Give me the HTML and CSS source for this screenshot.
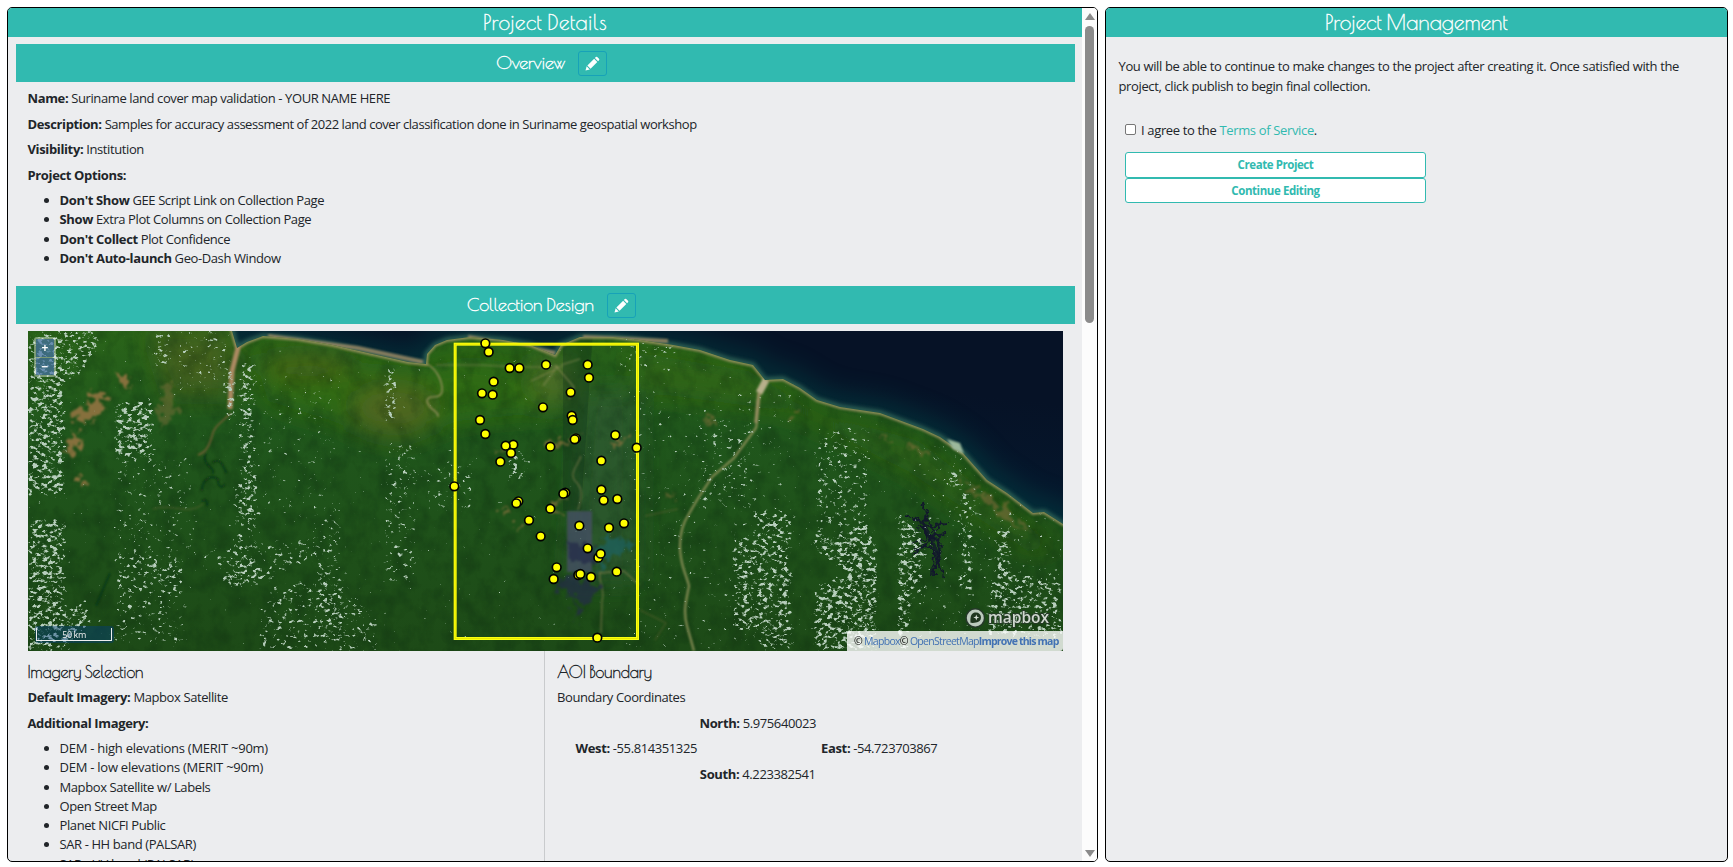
FILE: index.html
```html
<!DOCTYPE html>
<html lang="en">
<head>
<meta charset="utf-8">
<title>Project Details</title>
<link rel="stylesheet" href="styles.css">
</head>
<body>
<main class="page">
  <section class="panel details">
    <div class="scroll-content">
      <h1 class="panel-title"><span class="t-details">Project Details</span></h1>
      <div class="sections">
        <h2 class="section-title"><span class="t-overview">Overview</span>
          <button class="edit" aria-label="Edit overview"><svg viewBox="0 0 14 14"><path d="M.5 13.500l1-4 3 3z"/><path d="M2.200 8.800L8.500 2.500l3 3-6.300 6.300z"/><path d="M9.200 1.800l.9-.9q.7-.5 1.300 0l1.700 1.700q.5.6 0 1.300l-.9.9z"/></svg></button>
        </h2>
        <div class="overview">
          <p><b>Name:</b> <span class="t-name">Suriname land cover map validation - YOUR NAME HERE</span></p>
          <p><b>Description:</b> <span class="t-desc">Samples for accuracy assessment of 2022 land cover classification done in Suriname geospatial workshop</span></p>
          <p><b>Visibility:</b> Institution</p>
          <p><b>Project Options:</b></p>
          <ul>
            <li><b>Don't Show</b> GEE Script Link on Collection Page</li>
            <li><b>Show</b> Extra Plot Columns on Collection Page</li>
            <li><b>Don't Collect</b> Plot Confidence</li>
            <li><b>Don't Auto-launch</b> Geo-Dash Window</li>
          </ul>
        </div>
        <h2 class="section-title"><span class="t-design">Collection Design</span>
          <button class="edit" aria-label="Edit design"><svg viewBox="0 0 14 14"><path d="M.5 13.500l1-4 3 3z"/><path d="M2.200 8.800L8.500 2.500l3 3-6.300 6.300z"/><path d="M9.200 1.800l.9-.9q.7-.5 1.300 0l1.700 1.700q.5.6 0 1.300l-.9.9z"/></svg></button>
        </h2>
        <div class="map">
          <svg class="imagery" viewBox="0 0 1035 320">
            <defs>
              <linearGradient id="sea" x1="0" y1="1" x2="0.35" y2="0">
                <stop offset="0" stop-color="#03353f"/><stop offset=".45" stop-color="#041c33"/><stop offset="1" stop-color="#061226"/>
              </linearGradient>
              <linearGradient id="land" x1="0" y1="0" x2="0" y2="1">
                <stop offset="0" stop-color="#2a6419"/><stop offset=".3" stop-color="#20571c"/><stop offset="1" stop-color="#1d4a17"/>
              </linearGradient>
              <filter id="b2" x="-30%" y="-30%" width="160%" height="160%"><feGaussianBlur stdDeviation="2"/></filter>
              <filter id="b1" x="-10%" y="-10%" width="120%" height="120%"><feGaussianBlur stdDeviation=".8"/></filter>
              <filter id="b12" x="-60%" y="-60%" width="220%" height="220%"><feGaussianBlur stdDeviation="12"/></filter>
              <filter id="rough" x="-20%" y="-20%" width="140%" height="140%" color-interpolation-filters="sRGB">
                <feTurbulence type="fractalNoise" baseFrequency=".12" numOctaves="3" seed="8" result="n"/>
                <feDisplacementMap in="SourceGraphic" in2="n" scale="22" xChannelSelector="R" yChannelSelector="G"/>
                <feGaussianBlur stdDeviation=".8"/>
              </filter>
              <filter id="wobble" x="-20%" y="-20%" width="140%" height="140%" color-interpolation-filters="sRGB">
                <feTurbulence type="fractalNoise" baseFrequency=".15" numOctaves="3" seed="4" result="n"/>
                <feDisplacementMap in="SourceGraphic" in2="n" scale="9" xChannelSelector="R" yChannelSelector="G"/>
                <feGaussianBlur stdDeviation=".6"/>
              </filter>
              <filter id="grain" x="0" y="0" width="100%" height="100%" color-interpolation-filters="sRGB">
                <feTurbulence type="fractalNoise" baseFrequency=".06 .05" numOctaves="5" seed="3"/>
                <feColorMatrix values="0 0 0 0 .02  0 0 0 0 .12  0 0 0 0 .05  1.600 0 0 0 -.65"/>
              </filter>
              <filter id="clouds" filterUnits="userSpaceOnUse" x="0" y="0" width="1035" height="320" color-interpolation-filters="sRGB">
                <feTurbulence type="fractalNoise" baseFrequency=".2 .27" numOctaves="4" seed="21"/>
                <feColorMatrix values="0 0 0 0 0  0 0 0 0 0  0 0 0 0 0  1 0 0 0 0" result="n"/>
                <feGaussianBlur in="SourceAlpha" stdDeviation="2 2" result="d"/>
                <feComposite in="n" in2="d" operator="arithmetic" k2="1" k3=".36" k4="-.875"/>
                <feColorMatrix values="0 0 0 0 .72  0 0 0 0 .81  0 0 0 0 .74  0 0 0 7 0"/>
                <feGaussianBlur stdDeviation=".45"/>
              </filter>
              <clipPath id="landclip"><path id="landpath" d="M-20 -20H203L204 0 209 17 219 11 235 5 270 8 305 14 340 22 380 31 398 33 399 23 407 14 419 9 442 6 475 9 502 14 527 24 533 14 552 6 585 6 612 9 645 14 672 19 702 29 725 34 737 49 755 48 772 57 789 69 812 76 852 82 895 98 912 106 935 122 959 149 979 162 1005 182 1016 181 1035 193 1055 200V340H-20Z"/></clipPath>
            </defs>
            <rect width="1035" height="320" fill="url(#sea)"/>
            <use href="#landpath" fill="none" stroke="#06594f" stroke-width="30" opacity=".35" filter="url(#b12)"/>
            <use href="#landpath" fill="none" stroke="#3f7c65" stroke-width="5" opacity=".7" filter="url(#b2)"/>
            <path d="M240 5L330 17 395 31M440 6L527 22M555 6L640 10" fill="none" stroke="#a48d66" stroke-width="4" opacity=".8" filter="url(#b1)"/>
            <g clip-path="url(#landclip)">
              <rect width="1035" height="320" fill="url(#land)"/>
              <g filter="url(#b12)">
                <path d="M225 20L390 40 440 25 530 40 530 80 430 90 370 110 240 70Z" fill="#347010" opacity=".7"/>
                <path d="M600 20L720 40 800 85 890 110 980 180 1035 220 1000 220 880 140 760 80 610 60Z" fill="#396b15" opacity=".6"/>
                <ellipse cx="365" cy="78" rx="42" ry="26" fill="#6b6226" opacity=".5"/>
                <path d="M120 0H205V65H140Z" fill="#59601f" opacity=".55"/>
                <ellipse cx="280" cy="35" rx="48" ry="12" fill="#626020" opacity=".5"/>
                <ellipse cx="525" cy="50" rx="22" ry="24" fill="#667235" opacity=".55"/>
                <path d="M555 60H610V250H540Z" fill="#315c38" opacity=".6"/>
              </g>
              <rect width="1035" height="320" filter="url(#grain)" opacity=".35"/>
              <path d="M535 0H565L553 180H535Z" fill="#11331a" opacity=".35"/>
              <g fill="none" stroke="#9a9360" filter="url(#b1)">
                <use href="#landpath" stroke-width="4" opacity=".85"/>
                <path d="M210 -2V17L204 40 202 78" stroke="#ac8a62" stroke-width="5"/>
                <path d="M203 82C193 92 186 95 184 105 180 120 175 122 170 124" stroke="#765f35" stroke-width="1.500"/>
                <path d="M399 33C410 39 415 52 414 61 411 70 400 62 399 70 402 81 411 79 410 86" stroke-width="1.400"/>
                <path d="M408 34H450L490 36 535 36" stroke-width="1" opacity=".6"/>
                <path d="M527 34L546 56 541 68M530 35L515 55M530 37L503 50M533 34L552 28" stroke-width="1.200" opacity=".65"/>
                <path d="M738 51C724 70 731 86 728 97L706 127 684 146 669 169 662 181C655 192 652 201 652 215 652 235 658 242 661 255 658 270 655 280 659 295L666 320" stroke="#858c54" stroke-width="2.200"/>
                <path d="M738 49L731 62" stroke="#b8b08b" stroke-width="7"/>
                <path d="M731 62L728 92" stroke="#978e60" stroke-width="3.500"/>
                <path d="M553 125C550 134 541 142 547 150 554 156 555 163 550 179M573 240C568 248 578 257 574 270L573 302M570 242L596 240 611 254" stroke="#8b8251" stroke-width="1.300" opacity=".65"/>
                <path d="M612 279L638 292 627 309M617 185L650 178" stroke="#85703e" stroke-width="1" opacity=".5"/>
                <path d="M125 178C145 172 160 185 175 173" stroke="#756b38" stroke-width="1" opacity=".6"/>
                <path d="M178 122C172 135 190 137 184 143M184 132C194 124 196 140 199 142M174 160C174 149 182 143 190 148 190 158 195 157 197 153M174 171C176 165 182 173 178 175M82 242L68 275" stroke="#0a3013" stroke-width="1.600"/>
              </g>
              <g fill="#86703d" filter="url(#rough)">
                <path d="M86 43H100L103 60 93 52ZM44 84L62 74 64 62 82 68 72 76 68 91 48 90ZM42 100L53 103 50 117 38 124ZM46 147h10v4H46z"/>
                <path d="M134 60L141 53 149 83 132 99Z" opacity=".45"/>
                <path d="M514 112L551 106 541 112 522 115ZM521 170H538V173H521ZM517 180H538V183H517ZM467 122L478 119 473 123ZM471 180H482V182H471ZM486 194h8v2h-8zM585 113L596 105 600 112 586 116Z" opacity=".75"/>
                <path d="M679 84h4l2 8h-6zM638 163h6v4h-6zM760 83h5v8h-5zM854 108h9v2h-9zM879 114L901 121 896 123 879 118ZM926 144L966 169 1006 202 976 186Z" opacity=".55"/>
              </g>
              <path d="M539 180H564V241H539Z" fill="#464f68" opacity=".75" filter="url(#b1)"/>
              <g filter="url(#rough)">
                <path d="M540 210L571 217 568 235 541 228ZM546 244L576 255 558 273 536 263 529 250ZM543 265L554 283 549 290Z" fill="#242b48" opacity=".7"/>
                <path d="M573 208L606 208 596 224 578 228 571 246Z" fill="#1e6263" opacity=".7"/>
              </g>
              <g fill="none" stroke="#12182c" filter="url(#wobble)" stroke-width="1.800">
                <path d="M895 172L899 188 905 199 912 207 909 229 917 247M878 185L896 190M882 212L915 203M885 222L904 207 918 202M895 217L913 190M905 244L906 220 890 210M890 195L914 215 907 238M900 178L896 200 904 214M900 195L919 192"/>
                <path d="M895 190L905 214 911 228" stroke-width="5" opacity=".8"/>
              </g>
              <g filter="url(#clouds)">
                <path d="M0 20H37V165H0Z"/>
                <path d="M0 188H37V320H0Z"/>
                <path d="M0 0H72V15L45 50H0Z" opacity=".9"/>
                <path d="M33 285L61 265V295L40 320H33Z"/>
                <rect x="86" y="70" width="40" height="57"/>
                <rect x="86" y="125" width="80" height="100" opacity=".45"/>
                <rect x="86" y="225" width="70" height="32" opacity=".75"/>
                <rect x="86" y="257" width="70" height="55" opacity=".6"/>
                <rect x="125" y="0" width="20" height="35" opacity=".8"/>
                <rect x="150" y="0" width="50" height="60" opacity=".5"/>
                <rect x="198" y="38" width="9" height="50"/>
                <rect x="212" y="32" width="14" height="160" opacity=".95"/>
                <rect x="205" y="150" width="24" height="90" opacity=".65"/>
                <rect x="225" y="40" width="85" height="150" opacity=".3"/>
                <path d="M165 220L290 205V250H250L230 280V320H350V285L290 230 210 255Z" opacity=".65"/>
                <path d="M188 250L215 235 250 245 215 258ZM290 280L305 268 313 300Z"/>
                <rect x="288" y="188" width="26" height="120" opacity=".55"/>
                <rect x="356" y="36" width="13" height="55" opacity=".9"/>
                <rect x="356" y="112" width="33" height="140" opacity=".6"/>
                <rect x="395" y="130" width="50" height="50" opacity=".5"/>
                <rect x="480" y="120" width="20" height="30" opacity=".8"/>
                <rect x="590" y="10" width="60" height="30" opacity=".5"/>
                <rect x="670" y="90" width="58" height="85" opacity=".4"/>
                <rect x="787" y="97" width="54" height="100" opacity=".65"/>
                <path d="M725 180H765V320H732V300H705V210L730 200Z" opacity=".87"/>
                <path d="M785 195L805 205 840 190 850 220V320H785V260L820 240 785 220Z"/>
                <path d="M869 185H883L897 220 885 245 880 320H869Z"/>
                <rect x="885" y="210" width="10" height="50" opacity=".9"/>
                <rect x="918" y="138" width="14" height="20"/>
                <rect x="930" y="160" width="16" height="105" opacity=".65"/>
                <rect x="969" y="196" width="13" height="70"/>
                <rect x="960" y="245" width="75" height="60" opacity=".85"/>
                <rect x="885" y="110" width="150" height="200" opacity=".3"/>
                <rect x="595" y="60" width="170" height="260" opacity=".25"/>
                <rect width="1035" height="320" opacity=".2"/>
              </g>
            </g>
            <path d="M919 108L932 112 936 123 925 118Z" fill="#9db99c" filter="url(#b1)"/>
            <g transform="translate(402 -11) scale(.33333)">
              <rect x="75.500" y="72.500" width="547" height="883" fill="none" stroke="#fbff0e" stroke-width="9"/>
              <rect x="75.500" y="72.500" width="547" height="883" fill="none" stroke="#e8e800" stroke-width="3"/>
              <g class="plots">
                <circle cx="166" cy="70" r="13"/><circle cx="176" cy="96" r="13"/><circle cx="239" cy="144" r="13"/><circle cx="268" cy="144" r="13"/><circle cx="348" cy="134" r="13"/><circle cx="473" cy="134" r="13"/><circle cx="477" cy="173" r="13"/><circle cx="191" cy="185" r="13"/><circle cx="156" cy="220" r="13"/><circle cx="188" cy="224" r="13"/><circle cx="422" cy="217" r="13"/><circle cx="339" cy="262" r="13"/><circle cx="425" cy="287" r="13"/><circle cx="428" cy="300" r="13"/><circle cx="150" cy="300" r="13"/><circle cx="166" cy="342" r="13"/><circle cx="438" cy="355" r="13"/><circle cx="434" cy="358" r="13"/><circle cx="556" cy="345" r="13"/><circle cx="250" cy="374" r="13"/><circle cx="227" cy="377" r="13"/><circle cx="243" cy="399" r="13"/><circle cx="361" cy="380" r="13"/><circle cx="620" cy="383" r="13"/><circle cx="211" cy="425" r="13"/><circle cx="514" cy="422" r="13"/><circle cx="73" cy="499" r="13"/><circle cx="514" cy="509" r="13"/><circle cx="406" cy="518" r="13"/><circle cx="400" cy="521" r="13"/><circle cx="521" cy="541" r="13"/><circle cx="562" cy="537" r="13"/><circle cx="265" cy="544" r="13"/><circle cx="259" cy="550" r="13"/><circle cx="361" cy="566" r="13"/><circle cx="297" cy="601" r="13"/><circle cx="448" cy="617" r="13"/><circle cx="582" cy="610" r="13"/><circle cx="537" cy="623" r="13"/><circle cx="332" cy="649" r="13"/><circle cx="473" cy="685" r="13"/><circle cx="505" cy="713" r="13"/><circle cx="512" cy="701" r="13"/><circle cx="380" cy="742" r="13"/><circle cx="371" cy="777" r="13"/><circle cx="445" cy="765" r="13"/><circle cx="451" cy="762" r="13"/><circle cx="483" cy="771" r="13"/><circle cx="560" cy="755" r="13"/><circle cx="502" cy="953" r="13"/>
              </g>
            </g>
            <g>
              <circle cx="947.300" cy="287" r="10" fill="#26382a"/>
              <circle cx="947.300" cy="287" r="8.500" fill="#bcc9bd"/>
              <path d="M942.500 291.800C942 284 944 281.500 948 281.500A5 5 0 0 1 948 291.500C946.500 292 944 292 942.500 291.800Z" fill="#20351f"/>
              <path d="M948.300 283.500l.8 2.200 2.200.8-2.200.8-.8 2.200-.8-2.200-2.200-.8 2.200-.8z" fill="#d3dcd2"/>
              <text x="960" y="291.500" class="logo-text" textLength="61" lengthAdjust="spacingAndGlyphs">mapbox</text>
            </g>
          </svg>
          <div class="zoomer"><button>+</button><button>−</button></div>
          <div class="scale"><div>50 km</div></div>
          <div class="attribution">© <a>Mapbox</a>© <a>OpenStreetMap</a><a><b>Improve this map</b></a></div>
        </div>
        <div class="columns">
          <div class="col imagery-col">
            <h3><span class="t-imagery">Imagery Selection</span></h3>
            <p><b>Default Imagery:</b> Mapbox Satellite</p>
            <p><b>Additional Imagery:</b></p>
            <ul>
              <li class="dem">DEM - high elevations (MERIT ~90m)</li>
              <li class="dem">DEM - low elevations (MERIT ~90m)</li>
              <li>Mapbox Satellite w/ Labels</li>
              <li>Open Street Map</li>
              <li>Planet NICFI Public</li>
              <li>SAR - HH band (PALSAR)</li>
              <li>SAR - HV band (PALSAR)</li>
            </ul>
          </div>
          <div class="col aoi-col">
            <h3><span class="t-aoi">AOI Boundary</span></h3>
            <p>Boundary Coordinates</p>
            <div class="coords">
              <div class="north"><b>North:</b> 5.975640023</div>
              <div class="west"><b>West:</b> -55.814351325</div>
              <div class="east"><b>East:</b> -54.723703867</div>
              <div class="south"><b>South:</b> 4.223382541</div>
            </div>
          </div>
        </div>
      </div>
    </div>
    <div class="scrollbar"><i class="up"></i><i class="thumb"></i><i class="down"></i></div>
  </section>
  <section class="panel management">
    <h1 class="panel-title"><span class="t-manage">Project Management</span></h1>
    <div class="manage-body">
      <p>You will be able to continue to make changes to the project after creating it. Once satisfied with the<br>project, click publish to begin final collection.</p>
      <label class="terms"><span class="check"></span><span>I agree to the <a>Terms of Service</a>.</span></label>
      <div class="actions"><button>Create Project</button><button>Continue Editing</button></div>
    </div>
  </section>
</main>
</body>
</html>
```
FILE: styles.css
```css
* { box-sizing: border-box; }
body {
  margin: 0;
  height: 867px;
  overflow: hidden;
  background: #fff;
  color: #212529;
  font: 13px/19.5px "Segoe UI", "Open Sans", sans-serif;
  letter-spacing: -0.4px;
}
b { letter-spacing: -0.36px; }
h1, h2, h3, p, ul { margin: 0; font-weight: 400; }
h1, h2, h3 { -webkit-text-stroke: .4px currentColor; }
a { color: #31bab0; }
.page { display: flex; gap: 7px; padding: 7px 5px 5px 7px; height: 867px; }
.panel { border: 1px solid #000; border-radius: 5px; background: #ecedef; overflow: hidden; }
.details { width: 1091px; display: flex; }
.management { width: 623px; }
.scroll-content { flex: 1; overflow: hidden; }
.panel-title {
  height: 29px;
  background: #31bab0;
  color: #fff;
  text-align: center;
  font: 21px/29px "Poiret One", Lato, sans-serif;
}
.t-details { letter-spacing: .5px; }
.t-manage { letter-spacing: .15px; }
.t-overview { letter-spacing: -.25px; }
.t-design { letter-spacing: -.1px; }
.t-imagery, .t-aoi { letter-spacing: -.15px; }
.t-desc { letter-spacing: -.45px; }
.dem { letter-spacing: -.25px; }
.sections { padding: 7px 7px 0 8px; }
.section-title {
  display: flex;
  align-items: center;
  justify-content: center;
  gap: 13px;
  height: 38px;
  padding-left: 12px;
  background: #31bab0;
  color: #fff;
  font: 18px/38px "Poiret One", Lato, sans-serif;
}
.edit {
  width: 29px;
  height: 25px;
  padding: 0;
  border: 1px solid #17a2b8;
  border-radius: 3px;
  background: none;
  display: grid;
  place-items: center;
}
.edit svg { width: 15px; height: 15px; fill: #fff; }
.overview { padding: 7px 12px 0 11.5px; height: 204px; }
.overview p, .col p { margin-bottom: 6px; }
ul { padding-left: 32px; line-height: 19.25px; }
.map { position: relative; height: 320px; margin: 7px 12px 0; overflow: hidden; }
.imagery { display: block; width: 1035px; height: 320px; }
.plots { fill: #ff0; stroke: #000; stroke-width: 5; }
.logo-text { font: 600 17px "Open Sans", sans-serif; letter-spacing: 0; fill: #d0d9d0; stroke: #263a28; stroke-width: 2px; paint-order: stroke; }
.zoomer { position: absolute; left: 6px; top: 6px; width: 22px; padding: 2px; border-radius: 3px; background: rgba(255,255,255,.4); display: grid; gap: 1px; }
.zoomer button { height: 17.5px; padding: 0; border: 0; background: rgba(0,60,136,.5); color: #fff; font: bold 12px/17px "Open Sans", sans-serif; }
.scale { position: absolute; left: 7px; top: 295px; width: 79px; height: 17px; padding: 2px; border-radius: 3px; background: rgba(0,60,136,.4); }
.scale div { width: 76px; height: 13px; margin-left: -1px; border: 1px solid #eee; border-top: 0; color: #eee; text-align: center; font-size: 9px; line-height: 13px; }
.attribution { position: absolute; right: 0; bottom: 0; width: 216px; height: 20px; padding-left: 7px; border-radius: 3px 0 3px 0; background: rgba(255,255,255,.8); color: #000; font-size: 10.5px; line-height: 21px; white-space: nowrap; letter-spacing: -.7px; }
.attribution b { letter-spacing: -.8px; }
.attribution a { color: #4272b4; }
.columns { display: grid; grid-template-columns: 516.5px 1fr; margin: 0 12px 0 11.5px; }
.col { height: 230px; padding-top: 11px; }
.aoi-col { border-left: 1px solid #c9cbcd; padding-left: 12px; }
h3 { font: 16px/20px "Poiret One", Lato, sans-serif; margin-bottom: 6px; }
.coords { display: grid; grid-template-columns: repeat(3, 121.5px); row-gap: 6px; width: 364px; margin-left: 18.5px; text-align: center; white-space: nowrap; }
.north, .south { grid-column: 2; }
.west { grid-column: 1; }
.east { grid-column: 3; }
.scrollbar { width: 15px; background: #fcfcfc; display: flex; flex-direction: column; align-items: center; padding: 5px 0 4px; }
.up { border: 5px solid transparent; border-top: 0; border-bottom: 7px solid #8b8b8b; }
.down { border: 5px solid transparent; border-bottom: 0; border-top: 7px solid #8b8b8b; margin-top: auto; }
.thumb { width: 9px; height: 297px; margin-top: 6px; border-radius: 5px; background: #8b8b8b; }
.manage-body { padding: 19px 12.5px; }
.manage-body p { line-height: 20px; white-space: nowrap; letter-spacing: -.37px; }
.terms { display: flex; gap: 5px; margin: 25px 0 0 6.5px; letter-spacing: -.35px; }
.check { width: 11px; height: 11px; margin-top: 3px; border: 1px solid #767676; border-radius: 2px; background: #fff; }
.actions { width: 301px; margin: 11.5px 0 0 6.5px; display: grid; }
.actions button { height: 25.5px; border: 1px solid #31bab0; border-radius: 3px; background: #fff; color: #31bab0; font: bold 11.5px "Segoe UI", "Open Sans", sans-serif; letter-spacing: -.43px; }
```
